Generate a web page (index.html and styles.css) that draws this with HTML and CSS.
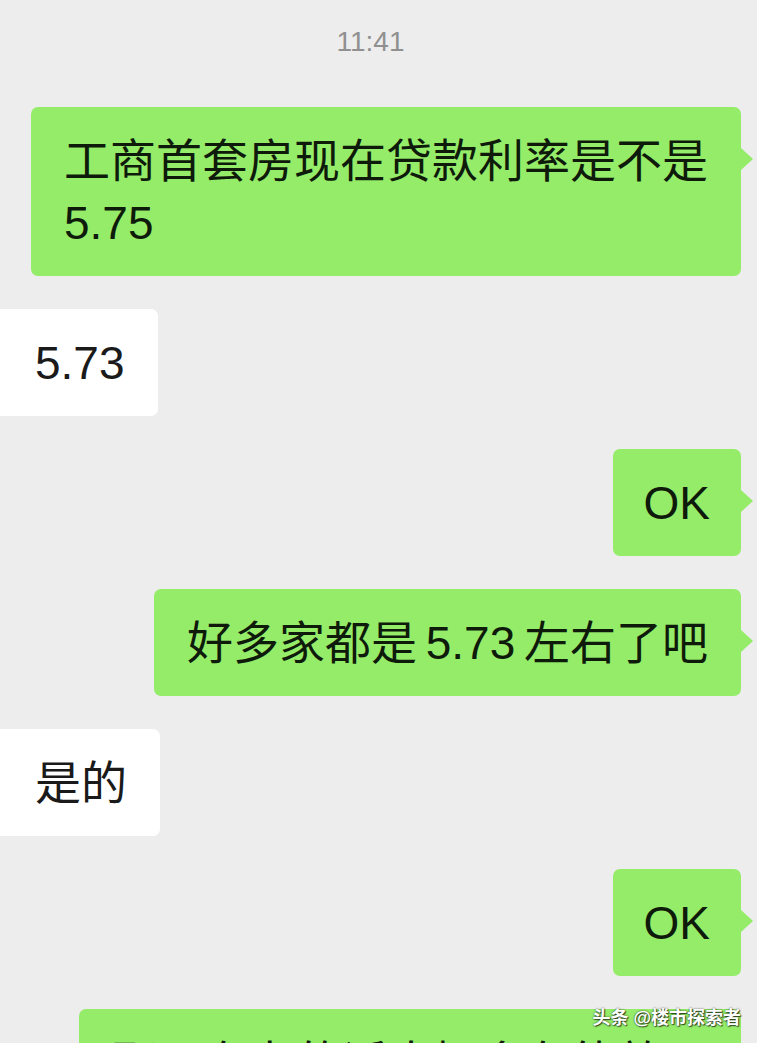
FILE: index.html
```html
<!DOCTYPE html>
<html lang="zh-CN">
<head>
  <meta charset="UTF-8">
  <meta name="viewport" content="width=device-width, initial-scale=1.0">
  <title>聊天记录</title>
  <link rel="stylesheet" href="styles.css">
</head>
<body>
  <div class="chat">
    <div class="time">11:41</div>

    <div class="row mine">
      <div class="bubble green">工商首套房现在贷款利率是不是<br>5.75</div>
    </div>

    <div class="row theirs">
      <div class="bubble white">5.73</div>
    </div>

    <div class="row mine">
      <div class="bubble green short">OK</div>
    </div>

    <div class="row mine">
      <div class="bubble green tight">好多家都是 5.73 左右了吧</div>
    </div>

    <div class="row theirs">
      <div class="bubble white">是的</div>
    </div>

    <div class="row mine">
      <div class="bubble green short">OK</div>
    </div>

    <div class="row mine">
      <div class="bubble green wide">那现在办的话大概多久能放款</div>
    </div>
  </div>

  <div class="watermark">头条 @楼市探索者</div>
</body>
</html>
```

FILE: styles.css
```css
html, body {
  height: 100%;
  overflow: hidden;
}
body {
  margin: 0;
  background-color: #ededed;
  font-family: "Liberation Sans", "Noto Sans CJK SC", sans-serif;
  position: relative;
}
.chat {
  display: flex;
  flex-direction: column;
  gap: 33px;
  padding: 26px 16px 0 0;
}
.time {
  text-align: center;
  font-size: 28px;
  line-height: 32px;
  color: #909090;
  margin-bottom: 16px;
}
.row {
  display: flex;
}
.row.mine {
  justify-content: flex-end;
}
.row.theirs {
  justify-content: flex-start;
}
.bubble {
  position: relative;
  font-size: 46px;
  line-height: 62px;
  padding: 22.5px 33px;
  border-radius: 7px;
}
.bubble.green {
  background-color: #95ec69;
  color: #0e1a0a;
}
.bubble.white {
  background-color: #ffffff;
  color: #1a1a1a;
  padding-left: 35px;
  border-radius: 0 7px 7px 0;
}
.bubble.green::after {
  content: "";
  position: absolute;
  right: -12px;
  top: 41px;
  border-top: 11px solid transparent;
  border-bottom: 11px solid transparent;
  border-left: 12px solid #95ec69;
}
.bubble.short {
  padding-left: 31px;
  padding-right: 31px;
}
.bubble.tight {
  word-spacing: -4px;
}
.bubble.wide {
  width: 596px;
}
.watermark {
  position: absolute;
  right: 16px;
  top: 1008px;
  font-size: 18px;
  line-height: 20px;
  font-weight: bold;
  color: #ffffff;
  text-shadow: 0 0 2px rgba(0, 0, 0, 0.7), 1px 1px 1px rgba(0, 0, 0, 0.6);
}
```
